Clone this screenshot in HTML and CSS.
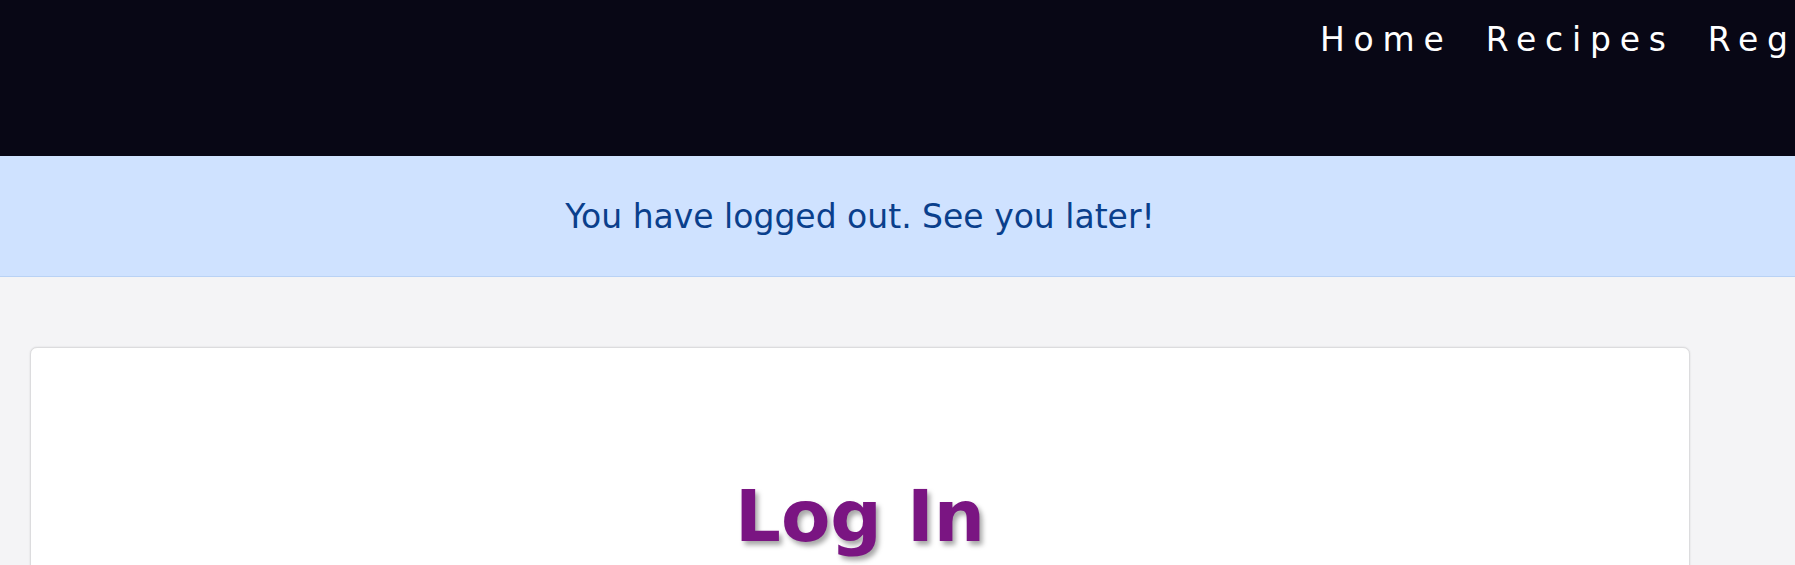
FILE: index.html
```html
<!DOCTYPE html>
<html lang="en">
<head>
<meta charset="utf-8">
<title>Log In</title>
<link rel="stylesheet" href="styles.css">
</head>
<body>
<header class="navbar">
  <ul class="nav-links">
    <li><a class="nav-link" href="#">Home</a></li>
    <li><a class="nav-link" href="#">Recipes</a></li>
    <li><a class="nav-link" href="#">Register</a></li>
    <li><a class="nav-link" href="#">Log In</a></li>
  </ul>
</header>
<div class="alert">You have logged out. See you later!</div>
<main class="main">
  <section class="card">
    <h1 class="title">Log In</h1>
  </section>
</main>
</body>
</html>
```
FILE: styles.css
```css
html, body {
  margin: 0;
  padding: 0;
}
body {
  background: #f4f4f6;
  font-family: "DejaVu Sans", "Liberation Sans", sans-serif;
  overflow: hidden;
  height: 565px;
}
.navbar {
  background: #080715;
  height: 156px;
  overflow: hidden;
}
.nav-links {
  list-style: none;
  margin: 0;
  padding: 20px 0 0 1320px;
  display: flex;
  white-space: nowrap;
}
.nav-link {
  display: block;
  color: #ffffff;
  text-decoration: none;
  font-size: 33px;
  line-height: 40px;
  letter-spacing: 8.8px;
  margin-right: 33px;
}
.alert {
  background: #cfe2ff;
  color: #0a3f8c;
  border-bottom: 1px solid #b9d2f5;
  font-size: 33px;
  line-height: 38px;
  padding: 42px 75px 40px 0;
  text-align: center;
}
.main {
  padding: 70px 0 0 30px;
}
.card {
  width: 1658px;
  height: 400px;
  background: #ffffff;
  border: 1px solid #dcdcde;
  border-radius: 7px;
  box-shadow: 0 0 2px rgba(0,0,0,0.12);
}
.title {
  margin: 125px 0 0;
  text-align: center;
  font-size: 72px;
  line-height: 1.2;
  font-weight: 700;
  color: #7a1582;
  text-shadow: 3px 4px 5px rgba(0,0,0,0.35);
}
```
